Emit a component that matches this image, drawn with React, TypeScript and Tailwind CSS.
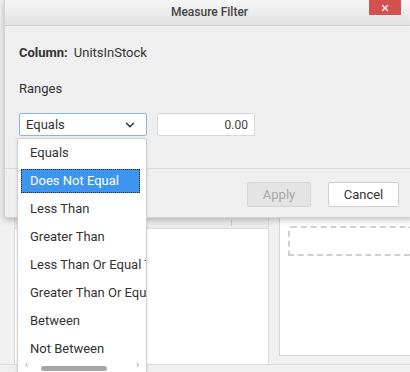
import { ChevronDown, X } from 'lucide-react';

const options = [
  'Equals',
  'Does Not Equal',
  'Less Than',
  'Greater Than',
  'Less Than Or Equal To',
  'Greater Than Or Equal To',
  'Between',
  'Not Between',
];

const App = () => {
  return (
    <div
      className="relative w-[410px] h-[372px] overflow-hidden bg-[#f0f0f0] text-[#333]"
      style={{ fontFamily: 'Roboto, "Liberation Sans", sans-serif' }}
    >
      {/* Background page panels */}
      <div className="flex h-[365px] pl-[14px] pt-[218px] border-b border-[#dcdcdc]">
        <div className="w-[255px] flex flex-col bg-white border-x border-[#dcdcdc]">
          <div className="h-[11px] bg-[#ececec] border-b border-[#dcdcdc] flex justify-end pr-[36px]">
            <div className="w-px h-[6px] bg-[#c8c8c8] mt-[2px]" />
          </div>
          <div className="flex-1" />
        </div>
        <div className="w-[10px]" />
        <div className="flex-1 flex flex-col">
          <div className="h-[138px] bg-white border-l border-b border-[#d6d6d6] pl-[8px] pt-[8px]">
            <div className="h-[30px] border-2 border-dashed border-[#d0d0d0] border-r-0 rounded-tl-[3px]" />
          </div>
        </div>
      </div>

      {/* Dialog */}
      <div className="absolute left-[4px] top-0 w-[410px] h-[218px] bg-[#efefef] rounded-b-[3px] border-l border-b border-[#d4d4d4] shadow-[0_2px_6px_rgba(0,0,0,0.25)] flex flex-col">
        <div className="relative h-[26px] flex items-center justify-center bg-gradient-to-b from-[#f6f6f6] to-[#e2e2e2] border-b border-[#cfcfcf]">
          <span className="text-[12px] font-medium text-[#444] -mt-[2px]">Measure Filter</span>
          <div className="absolute left-[364px] top-0 w-[32px] h-[15px] bg-[#d35151] flex items-center justify-center">
            <X size={10} strokeWidth={3} className="text-white" />
          </div>
        </div>
        <div className="flex flex-col pl-[14px] pt-[18px]">
          <div className="flex items-center gap-[6px] text-[13px] h-[18px]">
            <span className="font-bold text-[#333]">Column:</span>
            <span>UnitsInStock</span>
          </div>
          <div className="text-[13px] h-[18px] mt-[18px] flex items-center">Ranges</div>
          <div className="flex items-center gap-[10px] mt-[15px]">
            <div className="w-[128px] h-[23px] bg-white border border-[#86b6ea] rounded-[2px] flex items-center justify-between pl-[6px] pr-[9px] text-[13px]">
              <span>Equals</span>
              <ChevronDown size={14} strokeWidth={2.5} className="text-[#333]" />
            </div>
            <div className="w-[98px] h-[23px] bg-white border border-[#d8d8d8] rounded-[2px] flex items-center justify-end pr-[6px] text-[12px] text-[#444]">
              0.00
            </div>
          </div>
        </div>
        <div className="mt-[32px] border-t border-[#dadada] flex justify-end gap-[17px] pr-[15px] pt-[13px]">
          <button className="w-[64px] h-[25px] bg-[#e4e4e4] border border-[#d6d6d6] rounded-[2px] text-[13px] text-[#a8a8a8]">
            Apply
          </button>
          <button className="w-[71px] h-[25px] bg-white border border-[#cfcfcf] rounded-[2px] text-[13px] text-[#333]">
            Cancel
          </button>
        </div>
      </div>

      {/* Dropdown popup */}
      <div className="absolute left-[17px] top-[138px] w-[130px] h-[240px] bg-white border border-[#cfcfcf] rounded-t-[2px] shadow-[0_1px_3px_rgba(0,0,0,0.12)] flex flex-col">
        <div className="overflow-hidden text-[13px] whitespace-nowrap pr-[3px]">
          {options.map((opt) => (
            <div key={opt} className="h-[28px] px-[3px] py-[2px] flex">
              <div
                className={`flex-1 flex items-center pl-[8px] ${
                  opt === 'Does Not Equal'
                    ? 'bg-[#3e95f0] text-white border border-dotted border-[#222]'
                    : 'text-[#333] border border-transparent'
                }`}
              >
                {opt}
              </div>
            </div>
          ))}
        </div>
        <div className="flex items-center h-[10px] px-[7px] mt-[-3px] text-[#999] text-[10px]">
          <span className="leading-none">‹</span>
          <div className="ml-[13px] w-[66px] h-[5px] rounded-full bg-[#a6a6a6] mt-[6px]" />
          <span className="ml-auto leading-none">›</span>
        </div>
      </div>
    </div>
  );
};

export default App;
